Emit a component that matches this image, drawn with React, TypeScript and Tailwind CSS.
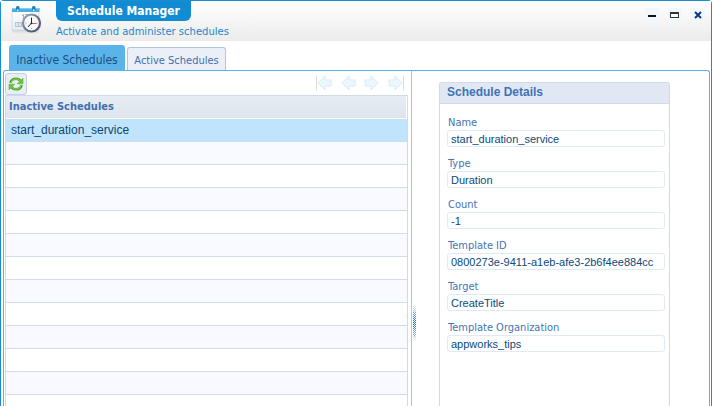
import React from "react";

const tahoma = "font-['DejaVu_Sans_Condensed',sans-serif]";
const verdana = "font-['DejaVu_Sans',sans-serif]";
const arial = "font-['Liberation_Sans',sans-serif]";

const schedules = ["start_duration_service", "", "", "", "", "", "", "", "", "", "", "", ""];

const details = [
  { id: "name", label: "Name", value: "start_duration_service" },
  { id: "type", label: "Type", value: "Duration" },
  { id: "count", label: "Count", value: "-1" },
  { id: "template-id", label: "Template ID", value: "0800273e-9411-a1eb-afe3-2b6f4ee884cc" },
  { id: "target", label: "Target", value: "CreateTitle" },
  { id: "template-org", label: "Template Organization", value: "appworks_tips" },
];

function ScheduleIcon() {
  return (
    <svg width="32" height="30" viewBox="0 0 32 30" aria-hidden="true">
      <defs>
        <linearGradient id="rim" x1="0" y1="0" x2="1" y2="1">
          <stop offset="0" stopColor="#a4aab8" />
          <stop offset="0.5" stopColor="#6c7485" />
          <stop offset="1" stopColor="#465068" />
        </linearGradient>
        <linearGradient id="sheet" x1="0" y1="0" x2="0" y2="1">
          <stop offset="0" stopColor="#ffffff" />
          <stop offset="1" stopColor="#e8eef2" />
        </linearGradient>
        <linearGradient id="fade" x1="0" y1="0" x2="0" y2="1">
          <stop offset="0" stopColor="#c3cad2" />
          <stop offset="1" stopColor="#eeeeee" />
        </linearGradient>
      </defs>
      <rect x="1" y="25" width="26" height="4" fill="url(#fade)" opacity="0.7" />
      <rect x="1" y="4" width="27" height="21" fill="url(#sheet)" stroke="#cdd8e0" strokeWidth="0.8" />
      <rect x="1" y="3" width="27.500" height="4" fill="#48aee0" />
      <rect x="1" y="3" width="27.500" height="1.200" fill="#7fcdf0" />
      <rect x="5" y="1" width="3.500" height="5" rx="1.500" fill="#1f80b8" />
      <rect x="21" y="1" width="3.500" height="5" rx="1.500" fill="#1f80b8" />
      <circle cx="6.700" cy="5.200" r="0.900" fill="#d9f1fc" />
      <circle cx="22.700" cy="5.200" r="0.900" fill="#d9f1fc" />
      <path d="M11 10.500l1.500-1v5M14 9.500h3" stroke="#a9b1bb" fill="none" />
      <rect x="4.500" y="17.500" width="6" height="4" fill="#e3e8ed" stroke="#b9c3cc" />
      <path d="M7.500 17v5" stroke="#b9c3cc" />
      <circle cx="20.500" cy="18" r="8.500" fill="#f6f8fc" stroke="url(#rim)" strokeWidth="2.200" />
      <g fill="#8b93a0">
        <circle cx="20.500" cy="12.500" r="0.500" />
        <circle cx="20.500" cy="23.500" r="0.500" />
        <circle cx="15" cy="18" r="0.500" />
        <circle cx="26" cy="18" r="0.500" />
      </g>
      <path d="M20.500 13v5M20.500 18l-3.500 4" stroke="#20283a" strokeWidth="1" />
      <path d="M20.500 18.500h5" stroke="#e0604c" strokeWidth="1" />
      <circle cx="20.500" cy="18.300" r="0.900" fill="#20283a" />
    </svg>
  );
}

function RefreshIcon() {
  return (
    <svg width="16" height="16" viewBox="0 0 16 16" aria-hidden="true">
      <g fill="none" stroke="#4fa623" strokeWidth="2.600">
        <path d="M2.200 6.800C3.300 3.900 5.500 2.700 8 2.700c2 0 3.300.7 4.400 2" />
        <path d="M13.800 9.200c-1.100 2.900-3.300 4.100-5.800 4.100-2 0-3.300-.7-4.400-2" />
      </g>
      <path d="M15 2.200v5.600H9.200z" fill="#6cc23a" stroke="#4fa623" strokeWidth="0.500" />
      <path d="M1 13.800V8.200h5.800z" fill="#6cc23a" stroke="#4fa623" strokeWidth="0.500" />
      <g fill="none" stroke="#8ad455" strokeWidth="1">
        <path d="M3 6.200C4.100 4 5.900 3 8 3c1.800 0 3 .6 4 1.700" />
        <path d="M13 9.800c-1.100 2.200-2.900 3.200-5 3.200-1.800 0-3-.6-4-1.700" />
      </g>
    </svg>
  );
}

function ArrowIcon({ right = false, bar = false }: { right?: boolean; bar?: boolean }) {
  return (
    <svg width="16" height="16" viewBox="0 0 16 16" aria-hidden="true" className={right ? "-scale-x-100" : ""}>
      {bar && <path d="M0.500 0.500v15" stroke="#dedede" />}
      <path d="M2 8l7-7v4h6v6H9v4z" fill="#edf8fe" stroke="#d6ecf7" strokeLinejoin="round" />
    </svg>
  );
}

function WindowButton({ label, children }: { label: string; children: React.ReactNode }) {
  return (
    <button type="button" aria-label={label} className="size-[14px] bg-[#f0f8fd]">
      <svg width="14" height="14" viewBox="0 0 14 14" aria-hidden="true">
        {children}
      </svg>
    </button>
  );
}

export default function App() {
  return (
    <div className="h-screen overflow-hidden bg-white pr-px">
      <main className="flex h-full flex-col rounded-t-sm border-x border-t border-[#168ed4]">
        <header className="flex h-10 shrink-0 items-start justify-between bg-linear-to-b from-white to-[#ebebeb] pr-[6px]">
          <div className="flex">
            <div className="w-[55px] pt-1 pl-[10px]">
              <ScheduleIcon />
            </div>
            <div>
              <h1 className={`${tahoma} flex h-5 w-[135px] items-center justify-center rounded-b-md bg-[#118cd2] text-[12px] font-bold text-white`}>
                Schedule Manager
              </h1>
              <p className={`${verdana} pt-[3px] text-[10px] leading-[15px] whitespace-nowrap text-[#1c86cc]`}>
                Activate and administer schedules
              </p>
            </div>
          </div>
          <div className="flex gap-[9px] pt-[7px]">
            <WindowButton label="Minimize">
              <path d="M3 7h8v2H3z" fill="#111" />
            </WindowButton>
            <WindowButton label="Maximize">
              <path d="M2 4h9v6H2z" fill="#333" />
              <path d="M3 6h7v3H3z" fill="#fff" />
            </WindowButton>
            <WindowButton label="Close">
              <path d="M4 4l6 6M10 4l-6 6" stroke="#0a3a86" strokeWidth="2" />
            </WindowButton>
          </div>
        </header>

        <nav role="tablist" aria-label="Schedules" className={`${tahoma} flex h-[29px] shrink-0 items-end gap-[2px] pl-2`}>
          <button type="button" role="tab" aria-selected="true" className="h-[25px] w-[116px] rounded-t-[3px] bg-[#5ab4ea] pt-1 text-[12px] whitespace-nowrap text-[#1a4f7d]">
            Inactive Schedules
          </button>
          <button type="button" role="tab" aria-selected="false" className="h-[23px] w-[99px] rounded-t-[3px] border border-b-0 border-[#b3c4de] bg-[#ebf0f8] pt-1 text-[11px] whitespace-nowrap text-[#3f6fae]">
            Active Schedules
          </button>
        </nav>

        <section className="mr-px ml-[2px] flex min-h-0 flex-1 rounded-t-[3px] border-x border-t border-[#56b4ec]">
          <div className="flex w-[408px] shrink-0 flex-col border-r border-[#a9c3e2] pr-[3px] pl-px">
            <div className="flex h-6 shrink-0 items-center justify-between pr-1">
              <button type="button" aria-label="Refresh" className="mt-px flex size-[22px] items-center justify-center rounded-[3px] border border-[#c3d0e3] bg-[#e9eef6]">
                <RefreshIcon />
              </button>
              <div className="flex gap-2">
                <button type="button" aria-label="First page"><ArrowIcon bar /></button>
                <button type="button" aria-label="Previous page"><ArrowIcon /></button>
                <button type="button" aria-label="Next page"><ArrowIcon right /></button>
                <button type="button" aria-label="Last page"><ArrowIcon right bar /></button>
              </div>
            </div>
            <div className="min-h-0 flex-1 overflow-hidden border-x border-t border-[#cddbeb]">
              <table className="w-full border-separate border-spacing-0">
                <thead>
                  <tr>
                    <th className={`${tahoma} h-[23px] border-r border-b border-white bg-linear-to-b from-[#e8edf4] to-[#dde4ec] bg-clip-padding px-[3px] py-0 text-left text-[11px] leading-4 font-bold text-[#4070b0]`}>
                      Inactive Schedules
                    </th>
                  </tr>
                </thead>
                <tbody>
                  {schedules.map((name, i) => (
                    <tr key={i} className={name ? "bg-[#bfe4fb]" : i % 2 ? "bg-[#f8faff]" : "bg-white"}>
                      <td className={`${arial} h-[23px] border-b border-[#d0ddec] px-[5px] py-0 text-[12px] leading-4 text-[#0f4772]`}>{name}</td>
                    </tr>
                  ))}
                </tbody>
              </table>
            </div>
          </div>

          <div className="flex w-[27px] shrink-0 items-start pt-[233px] pl-px">
            <svg width="3" height="38" viewBox="0 0 3 38" aria-hidden="true">
              <defs>
                <pattern id="dots" width="2" height="2" patternUnits="userSpaceOnUse">
                  <path d="M0 0h1v1H0zM1 1h1v1H1z" fill="#1878cc" />
                </pattern>
                <linearGradient id="ends" x1="0" y1="0" x2="0" y2="1">
                  <stop offset="0" stopColor="#000" />
                  <stop offset="0.4" stopColor="#fff" />
                  <stop offset="0.6" stopColor="#fff" />
                  <stop offset="1" stopColor="#000" />
                </linearGradient>
                <mask id="grip">
                  <rect width="3" height="38" fill="url(#ends)" />
                </mask>
              </defs>
              <rect width="3" height="38" fill="url(#dots)" mask="url(#grip)" />
            </svg>
          </div>

          <section className="mt-[11px] mr-[39px] min-w-0 flex-1 rounded-t-[3px] border-x border-t border-[#cfdaeb]">
            <h2 className={`${arial} h-[21px] border-b border-[#cfdaeb] bg-[#e1e8f4] pl-[7px] text-[12px] leading-[18px] font-bold text-[#4273b3]`}>
              Schedule Details
            </h2>
            <form className="pt-3 pr-1 pl-[7px]">
              {details.map(({ id, label, value }) => (
                <div key={id} className="flex h-[41px] flex-col">
                  <label htmlFor={id} className={`${tahoma} h-[14px] pl-px text-[11px] leading-[14px] text-[#4374b4]`}>
                    {label}
                  </label>
                  <input
                    id={id}
                    readOnly
                    defaultValue={value}
                    className={`${arial} h-[17px] w-full rounded-[3px] border border-[#e0eaf5] bg-white px-[3px] text-[11px] leading-[15px] text-[#0a4a7c] outline-none`}
                  />
                </div>
              ))}
            </form>
          </section>
        </section>
      </main>
    </div>
  );
}
